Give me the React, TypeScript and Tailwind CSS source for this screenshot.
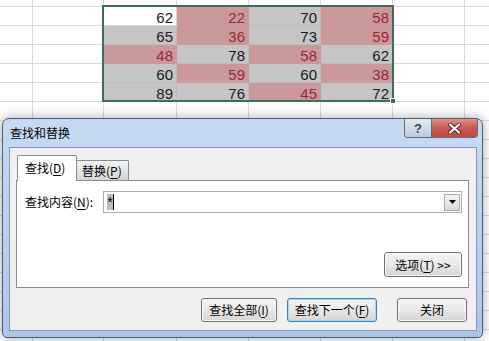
import React from 'react';

type Fill = 'w' | 'g' | 'p';

const data: [number, Fill][][] = [
  [[62, 'w'], [22, 'p'], [70, 'g'], [58, 'p']],
  [[65, 'g'], [36, 'p'], [73, 'g'], [59, 'p']],
  [[48, 'p'], [78, 'g'], [58, 'p'], [62, 'g']],
  [[60, 'g'], [59, 'p'], [60, 'g'], [38, 'p']],
  [[89, 'g'], [76, 'g'], [45, 'p'], [72, 'g']],
];

const dataWidths = ['w-[73px]', 'w-[72px]', 'w-[72px]', 'w-[72px]'];

const fillClass: Record<Fill, string> = {
  w: 'bg-white border-[#d9d9d9] text-[#1a1a1a]',
  g: 'bg-[#c5c5c5] border-[#bcbcbc] text-[#1a1a1a]',
  p: 'bg-[#c9999c] border-[#c9999c] text-[#9a2834]',
};

const Blank = ({ w, h }: { w: string; h: string }) => (
  <div className={`${w} ${h} shrink-0 border-r border-b border-[#d9d9d9] bg-white`} />
);

const Sheet = () => {
  const emptyRows = Array.from({ length: 13 });
  return (
    <div className="flex flex-col font-['Liberation_Sans',Arial,sans-serif]">
      <div className="flex">
        <Blank w="w-[33px]" h="h-[7px]" />
        <Blank w="w-[71px]" h="h-[7px]" />
        {dataWidths.map((w, i) => (
          <Blank key={i} w={w} h="h-[7px]" />
        ))}
        <Blank w="w-[72px]" h="h-[7px]" />
        <div className="h-[7px] flex-1 border-b border-[#d9d9d9]" />
      </div>
      {data.map((row, r) => (
        <div key={r} className="flex">
          <Blank w="w-[33px]" h="h-[19px]" />
          <Blank w="w-[71px]" h="h-[19px]" />
          {row.map(([v, f], c) => (
            <div
              key={c}
              className={`${dataWidths[c]} h-[19px] shrink-0 border-r border-b flex items-end justify-end pr-[3px] text-[15px] leading-none ${fillClass[f]}`}
            >
              {v}
            </div>
          ))}
          <Blank w="w-[72px]" h="h-[19px]" />
          <div className="h-[19px] flex-1 border-b border-[#d9d9d9]" />
        </div>
      ))}
      {emptyRows.map((_, r) => (
        <div key={r} className="flex">
          <Blank w="w-[33px]" h="h-[19px]" />
          <Blank w="w-[71px]" h="h-[19px]" />
          {dataWidths.map((w, i) => (
            <Blank key={i} w={w} h="h-[19px]" />
          ))}
          <Blank w="w-[72px]" h="h-[19px]" />
          <div className="h-[19px] flex-1 border-b border-[#d9d9d9]" />
        </div>
      ))}
    </div>
  );
};

const WinButton = ({
  children,
  w,
  primary,
}: {
  children: React.ReactNode;
  w: string;
  primary?: boolean;
}) => (
  <button
    className={`${w} h-[24px] rounded-[3px] border text-[12px] leading-none text-black flex items-center justify-center bg-gradient-to-b from-[#f4f4f4] via-[#e9e9e9] to-[#d4d4d4] ${
      primary
        ? 'border-[#3c7fb1] shadow-[inset_0_0_0_1px_#9ed8f4]'
        : 'border-[#707070] shadow-[inset_0_0_0_1px_#fcfcfc]'
    }`}
  >
    {children}
  </button>
);

const U = ({ children }: { children: React.ReactNode }) => <span className="underline underline-offset-2">{children}</span>;

const Dialog = () => (
  <div className="absolute left-[2px] top-[118px] w-[481px] h-[220px] flex flex-col rounded-t-[7px] rounded-b-[5px] border border-[#4d5d72] bg-gradient-to-b from-[#c6daf2] via-[#b9d1ee] to-[#a9c6e9] shadow-[0_0_12px_rgba(0,0,0,0.35)] font-['Noto_Sans_CJK_SC',sans-serif]">
    {/* title bar */}
    <div className="h-[28px] flex items-start shrink-0">
      <div className="pl-[7px] pt-[5px] text-[12px] leading-[18px] text-black">查找和替换</div>
      <div className="ml-auto mr-[4px] flex rounded-b-[4px] border border-t-0 border-[#5a6b80] overflow-hidden">
        <div className="w-[27px] h-[18px] flex items-center justify-center bg-gradient-to-b from-[#e2ebf5] to-[#bccbdd] border-r border-[#5a6b80] text-[13px] font-bold text-[#3e4a5a] font-['Liberation_Sans',sans-serif] leading-none">
          ?
        </div>
        <div className="w-[45px] h-[18px] flex items-center justify-center bg-gradient-to-b from-[#e09288] via-[#c9574c] to-[#c34a3f]">
          <svg width="13" height="11" viewBox="0 0 13 11">
            <path d="M2 1.5 L11 9.5 M11 1.5 L2 9.5" stroke="#5a2620" strokeWidth="4" strokeLinecap="round" />
            <path d="M2 1.5 L11 9.5 M11 1.5 L2 9.5" stroke="#ffffff" strokeWidth="2.2" strokeLinecap="round" />
          </svg>
        </div>
      </div>
    </div>
    {/* client area */}
    <div className="ml-[6px] mr-[5px] h-[184px] border border-[#8597af] bg-[#f0f0f0] flex flex-col">
      <div className="h-[25px] mt-[7px] flex items-end pl-[7px] text-[12px] leading-none text-black">
        <div className="relative z-10 -mb-px h-[26px] w-[60px] border border-b-0 border-[#898c95] rounded-t-[2px] bg-white flex items-center pl-[7px] pb-[2px]">
          查找(<U>D</U>)
        </div>
        <div className="h-[20px] w-[53px] -ml-px border border-b-0 border-[#898c95] rounded-t-[2px] bg-gradient-to-b from-[#f2f2f2] to-[#d6d6d6] flex items-center pl-[5px]">
          替换(<U>P</U>)
        </div>
      </div>
      <div className="ml-[6px] mr-[7px] h-[108px] border border-[#898c95] bg-white flex flex-col text-[12px] leading-none text-black">
        <div className="mt-[10px] flex items-center pl-[8px]">
          <div className="w-[78px]">
            查找内容(<U>N</U>):
          </div>
          <div className="w-[359px] h-[22px] border border-[#abadb3] flex items-center">
            <div className="ml-[3px] h-[16px] w-[7px] bg-[#bdbdbd] border-r border-black flex items-start justify-center font-['Liberation_Sans',sans-serif] text-[14px] leading-[16px]">
              *
            </div>
            <div className="ml-auto mr-px w-[16px] h-[17px] border border-[#a8a8a8] bg-gradient-to-b from-[#f3f3f3] to-[#dcdcdc] flex items-center justify-center">
              <svg width="7" height="4" viewBox="0 0 7 4">
                <path d="M0 0 H7 L3.5 4 Z" fill="#000" />
              </svg>
            </div>
          </div>
        </div>
        <div className="mt-auto mb-[10px] mr-[6px] flex justify-end">
          <WinButton w="w-[78px] h-[25px]">
            选项(<U>T</U>)&nbsp;&gt;&gt;
          </WinButton>
        </div>
      </div>
      <div className="mt-[10px] mr-[9px] flex justify-end">
        <WinButton w="w-[76px]">
          查找全部(<U>I</U>)
        </WinButton>
        <div className="ml-[10px]">
          <WinButton w="w-[90px]" primary>
            查找下一个(<U>F</U>)
          </WinButton>
        </div>
        <div className="ml-[20px]">
          <WinButton w="w-[70px]">关闭</WinButton>
        </div>
      </div>
    </div>
  </div>
);

export default function App() {
  return (
    <div className="relative w-[489px] h-[341px] overflow-hidden bg-white">
      <Sheet />
      {/* selection outline */}
      <div className="absolute left-[102px] top-[5px] w-[292px] h-[97px] border-2 border-[#3d6e5a]" />
      <div className="absolute left-[390px] top-[98px] w-[6px] h-[6px] bg-[#3d6e5a] border border-white" />
      <Dialog />
    </div>
  );
}
